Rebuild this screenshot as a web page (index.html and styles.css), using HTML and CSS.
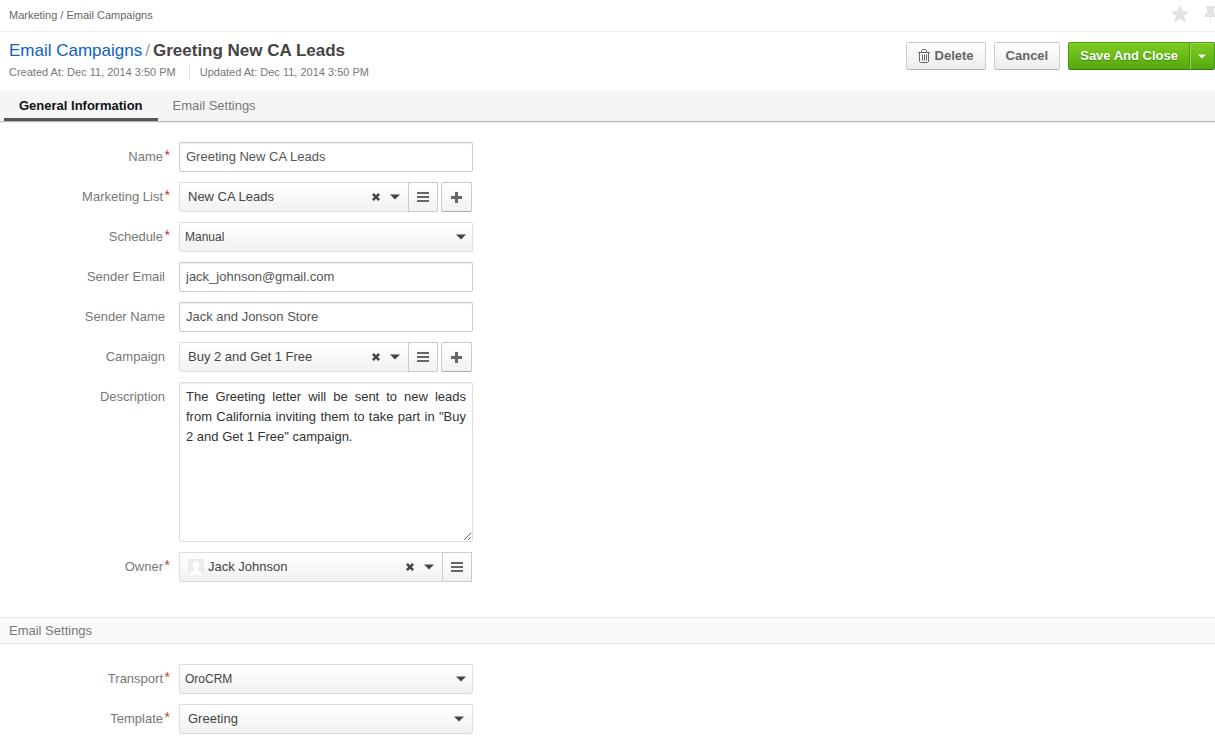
FILE: index.html
```
<!DOCTYPE html>
<html lang="en">
	<head>
		<meta charset="UTF-8">
		<title>Greeting New CA Leads - Email Campaigns</title>
		<link rel="stylesheet" href="styles.css">
	</head>
	<body>
		<!-- shared icons -->
		<svg class="icons" aria-hidden="true">
			<symbol id="caret" viewBox="0 0 10 6"><path d="M0 0.5h10L5 5.5z"/></symbol>
			<symbol id="cross" viewBox="0 0 8 8"><path d="M0 1.8L1.8 0 4 2.2 6.2 0 8 1.8 5.8 4 8 6.2 6.2 8 4 5.8 1.8 8 0 6.2 2.2 4z"/></symbol>
			<symbol id="bars" viewBox="0 0 12 10"><path d="M0 0h12v2H0zM0 4h12v2H0zM0 8h12v2H0z"/></symbol>
			<symbol id="plus" viewBox="0 0 11 11"><path d="M4 0h3v4h4v3H7v4H4V7H0V4h4z"/></symbol>
		</svg>

		<div class="top-bar">
			<nav class="breadcrumb">
				<a href="#">Marketing</a> / <a href="#">Email Campaigns</a>
			</nav>
			<div class="top-icons">
				<button type="button" class="icon-btn" aria-label="Add to favorites">
					<svg width="18" height="18" viewBox="0 0 18 18"><path d="M9 0l2.7 5.9 6.3.7-4.7 4.3 1.3 6.3L9 14l-5.600 3.200 1.300-6.300L0 6.600l6.300-.700z"/></svg>
				</button>
				<button type="button" class="icon-btn" aria-label="Pin page">
					<svg width="11" height="18" viewBox="0 0 11 18"><path d="M2 1h9v2h-1v5c1.500.500 2.500 1.500 2.500 4H7l-.3 6h-.4L6 12H.500c0-2.500 1-3.500 2.500-4V3H2z"/></svg>
				</button>
			</div>
		</div>

		<form>
			<div class="title-bar">
				<div class="title-info">
					<h1><a href="#">Email Campaigns</a><span>/</span>Greeting New CA Leads</h1>
					<ul class="dates">
						<li>Created At: Dec 11, 2014 3:50 PM</li>
						<li>Updated At: Dec 11, 2014 3:50 PM</li>
					</ul>
				</div>
				<div class="actions">
					<button type="button" class="btn">
						<svg class="trash" width="12" height="14" viewBox="0 0 12 14"><path d="M0 3.5h12M3.5 3V1.5l1-1h3l1 1V3M1.5 4v8.5l1 1h7l1-1V4M4.5 5.5v6M6.5 5.5v6M8.5 5.5v6"/></svg>
						Delete
					</button>
					<button type="button" class="btn">Cancel</button>
					<div class="btn-group">
						<button type="submit" class="btn green">Save And Close</button>
						<button type="button" class="btn green toggle" aria-label="More save options"><svg width="8" height="5"><use href="#caret"/></svg></button>
					</div>
				</div>
			</div>

			<nav class="tabs">
				<a href="#general" class="active">General Information</a>
				<a href="#settings">Email Settings</a>
			</nav>

			<div class="fields general" id="general">
				<div class="row">
					<label for="name" class="required">Name</label>
					<input type="text" id="name" class="control" value="Greeting New CA Leads">
				</div>
				<div class="row">
					<label for="list" class="required">Marketing List</label>
					<div class="control-group">
						<div class="choice">
							<select id="list"><option>New CA Leads</option></select>
							<button type="button" class="clear" aria-label="Clear marketing list"><svg width="8" height="8"><use href="#cross"/></svg></button>
							<svg class="arrow" width="10" height="6"><use href="#caret"/></svg>
						</div>
						<button type="button" class="tool" aria-label="Browse marketing lists"><svg width="12" height="10"><use href="#bars"/></svg></button>
						<button type="button" class="tool add" aria-label="Create marketing list"><svg width="11" height="11"><use href="#plus"/></svg></button>
					</div>
				</div>
				<div class="row">
					<label for="schedule" class="required">Schedule</label>
					<div class="choice control plain">
						<select id="schedule"><option>Manual</option></select>
						<svg class="arrow" width="10" height="6"><use href="#caret"/></svg>
					</div>
				</div>
				<div class="row">
					<label for="email">Sender Email</label>
					<input type="text" id="email" class="control" value="jack_johnson@gmail.com">
				</div>
				<div class="row">
					<label for="sender">Sender Name</label>
					<input type="text" id="sender" class="control" value="Jack and Jonson Store">
				</div>
				<div class="row">
					<label for="campaign">Campaign</label>
					<div class="control-group">
						<div class="choice">
							<select id="campaign"><option>Buy 2 and Get 1 Free</option></select>
							<button type="button" class="clear" aria-label="Clear campaign"><svg width="8" height="8"><use href="#cross"/></svg></button>
							<svg class="arrow" width="10" height="6"><use href="#caret"/></svg>
						</div>
						<button type="button" class="tool" aria-label="Browse campaigns"><svg width="12" height="10"><use href="#bars"/></svg></button>
						<button type="button" class="tool add" aria-label="Create campaign"><svg width="11" height="11"><use href="#plus"/></svg></button>
					</div>
				</div>
				<div class="row">
					<label for="description">Description</label>
					<textarea id="description" class="control">The Greeting letter will be sent to new leads from California inviting them to take part in "Buy 2 and Get 1 Free" campaign.</textarea>
				</div>
				<div class="row">
					<label for="owner" class="required">Owner</label>
					<div class="control-group">
						<div class="choice">
							<svg class="avatar" width="16" height="16" viewBox="0 0 16 16"><path fill="#ececec" d="M0 0h16v16H0z"/><path fill="#fff" d="M8 2c2.5 0 3.5 1.7 3.5 4 0 1.7-.8 3-1.7 3.8v1.4c2.6.8 4.7 1.8 4.7 4.8h-13c0-3 2.1-4 4.7-4.8V9.8C5.3 9 4.5 7.7 4.5 6c0-2.3 1-4 3.5-4z"/></svg>
							<select id="owner"><option>Jack Johnson</option></select>
							<button type="button" class="clear" aria-label="Clear owner"><svg width="8" height="8"><use href="#cross"/></svg></button>
							<svg class="arrow" width="10" height="6"><use href="#caret"/></svg>
						</div>
						<button type="button" class="tool" aria-label="Browse users"><svg width="12" height="10"><use href="#bars"/></svg></button>
					</div>
				</div>
			</div>

			<h2 id="settings">Email Settings</h2>
			<div class="fields">
				<div class="row">
					<label for="transport" class="required">Transport</label>
					<div class="choice control plain">
						<select id="transport"><option>OroCRM</option></select>
						<svg class="arrow" width="10" height="6"><use href="#caret"/></svg>
					</div>
				</div>
				<div class="row">
					<label for="template" class="required">Template</label>
					<div class="choice control">
						<select id="template"><option>Greeting</option></select>
						<svg class="arrow" width="10" height="6"><use href="#caret"/></svg>
					</div>
				</div>
			</div>
		</form>
	</body>
</html>
```
FILE: styles.css
```
* {
	box-sizing: border-box;
	margin: 0;
	padding: 0;
}

body {
	font: 13px/20px "Liberation Sans", Arial, sans-serif;
	color: #777;
	background: #fff;
}
a {
	color: inherit;
	text-decoration: none;
}
ul {
	list-style: none;
}
button, input, select, textarea {
	font: inherit;
	color: #444;
}
svg {
	display: block;
	flex: none;
	fill: currentColor;
}
.icons {
	display: none;
}

/* top bar */
.top-bar {
	display: flex;
	justify-content: space-between;
	height: 32px;
	padding: 5px 0 0 9px;
	border-bottom: 1px solid #eee;
}
.breadcrumb {
	font-size: 11px;
	color: #666;
}
.top-icons {
	display: flex;
	align-items: flex-start;
	gap: 15px;
}
.icon-btn {
	border: none;
	background: none;
	color: #e3e3e3;
}

/* title and buttons */
.title-bar {
	display: flex;
	justify-content: space-between;
	align-items: flex-start;
	min-height: 59px;
	padding: 9px 0 0 9px;
}
h1 {
	font-size: 17px;
	line-height: 20px;
	color: #444;
}
h1 a {
	font-weight: normal;
	color: #0b62c4;
}
h1 span {
	font-weight: normal;
	color: #999;
	margin: 0 3px;
}
.dates {
	display: flex;
	margin-top: 4px;
	font-size: 11px;
	line-height: 14px;
}
.dates li + li {
	margin-left: 13px;
	padding-left: 10px;
	border-left: 1px solid #ddd;
}
.actions {
	display: flex;
	gap: 8px;
	padding-top: 1px;
}
.btn {
	display: flex;
	align-items: center;
	gap: 5px;
	height: 28px;
	padding: 0 11px;
	font-weight: bold;
	color: #666;
	background: linear-gradient(#fff, #ececec);
	border: 1px solid #ccc;
	border-bottom-color: #b3b3b3;
	border-radius: 2px;
}
.trash {
	fill: none;
	stroke: currentColor;
}
.btn-group {
	display: flex;
}
.btn.green {
	color: #fff;
	text-shadow: 0 1px 1px #3b8410;
	background: linear-gradient(#80cc20, #55a80f);
	border-color: #4a9a1c;
	border-bottom-color: #34790f;
	border-radius: 2px 0 0 2px;
}
.btn.toggle {
	padding: 0 8px;
	margin-left: -1px;
	border-radius: 0 2px 2px 0;
	box-shadow: inset 1px 1px 0 #96d650;
}

/* tabs */
.tabs {
	display: flex;
	height: 31px;
	padding-left: 4px;
	background: #f5f5f5;
	border-bottom: 1px solid #bbb;
	box-shadow: 0 1px 0 #eee;
}
.tabs a {
	padding: 5px 15px;
	line-height: 19px;
}
.tabs .active {
	font-weight: bold;
	color: #111;
	border-bottom: 3px solid #555;
}

/* form */
.fields {
	display: flex;
	flex-direction: column;
	gap: 10px;
	padding: 20px 0;
}
.general {
	padding-bottom: 35px;
}
.row {
	display: flex;
	gap: 9px;
}
label {
	width: 170px;
	padding: 5px 5px 0 0;
	text-align: right;
}
.required {
	padding-right: 0;
}
.required::after {
	content: "*";
	display: inline-block;
	width: 7px;
	font-size: 14px;
	line-height: 16px;
	vertical-align: 1px;
	color: #c0392b;
}
.control {
	width: 294px;
}
input, textarea {
	padding: 4px 6px;
	background: #fff;
	border: 1px solid #ccc;
	border-radius: 2px;
	box-shadow: inset 0 1px 1px #eee;
}
input {
	height: 30px;
	padding-bottom: 6px;
	color: #555;
}
textarea {
	height: 160px;
	border-color: #ddd;
	color: #333;
	text-align: justify;
}
.control-group {
	display: flex;
	width: 293px;
}
.choice {
	display: flex;
	align-items: center;
	flex: 1;
	height: 30px;
	padding: 0 8px;
	color: #444;
	background: linear-gradient(#fff, #f1f1f1);
	border: 1px solid #ddd;
	border-radius: 2px;
}
.choice.control {
	flex: none;
}
.choice select {
	flex: 1;
	min-width: 0;
	height: 28px;
	appearance: none;
	background: none;
	border: none;
	outline: none;
}
.plain {
	padding: 0 6px 0 5px;
	font-size: 12px;
}
.clear {
	padding: 4px 10px 4px 4px;
	background: none;
	border: none;
}
.avatar {
	margin-right: 4px;
}
.tool {
	display: flex;
	align-items: center;
	justify-content: center;
	width: 30px;
	height: 30px;
	margin-left: -1px;
	color: #666;
	background: linear-gradient(#fff, #f1f1f1);
	border: 1px solid #ccc;
}
.tool.add {
	width: 31px;
	margin-left: 3px;
	border-bottom-color: #aaa;
	border-radius: 2px;
}

h2 {
	padding: 3px 9px 2px;
	font-size: 13px;
	font-weight: normal;
	background: #fafafa;
	border: solid #e3e3e3;
	border-width: 1px 0;
}
```
